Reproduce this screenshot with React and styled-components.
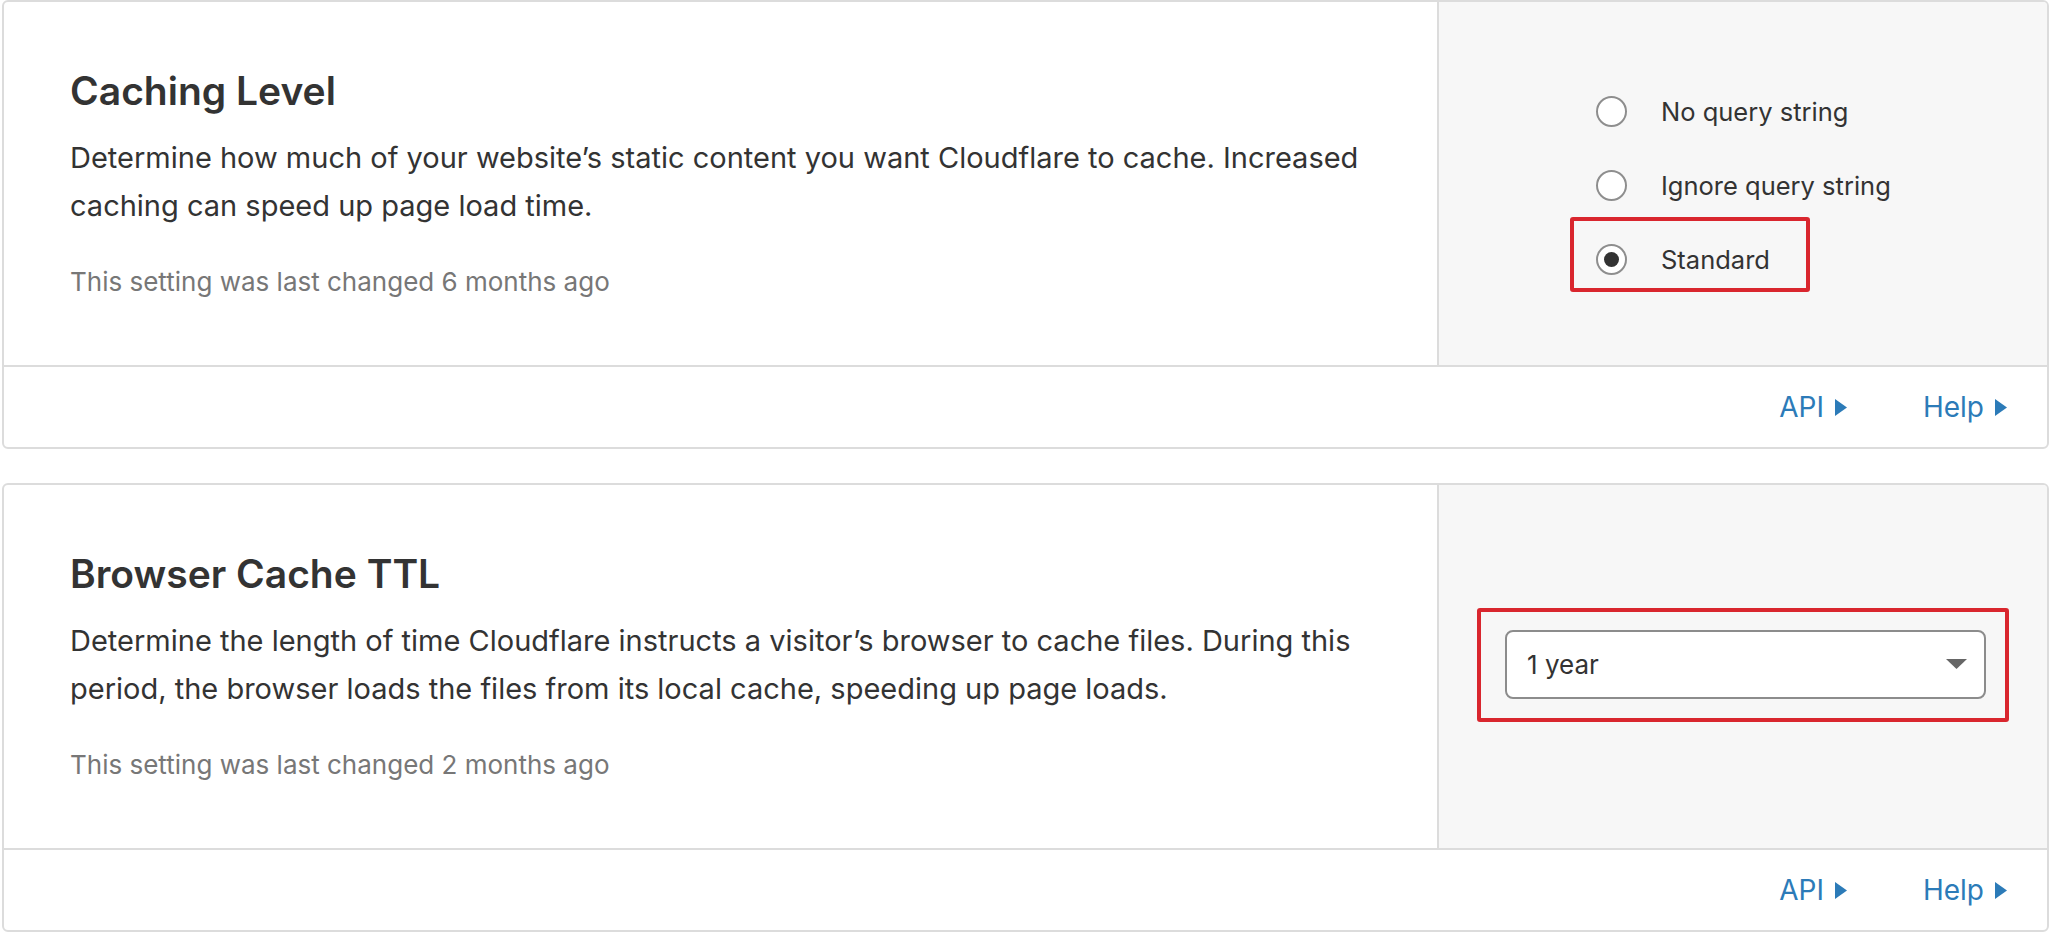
import React from 'react';
import styled, { createGlobalStyle } from 'styled-components';

const GlobalStyle = createGlobalStyle`
  body {
    margin: 0;
    background: #fff;
    font-family: Inter, "Noto Sans", sans-serif;
    color: #333;
  }
`

const Page = styled.div`
  display: flex;
  flex-direction: column;
  gap: 34px;
  padding: 0 1px 0 2px;
`

const Card = styled.section`
  border: 2px solid #dcdcdc;
  border-radius: 6px;
  background: #fff;
  overflow: hidden;
`

Card.Body = styled.div`
  display: grid;
  grid-template-columns: 1fr 610px;
  height: 363px;
  border-bottom: 2px solid #dcdcdc;
`

Card.Text = styled.div`
  padding: 67px 30px 0 66px;
`

Card.Title = styled.h3`
  margin: 0 0 21px;
  font-size: 39px;
  line-height: 44px;
  font-weight: 600;
  color: #333;
`

Card.Desc = styled.p`
  margin: 0;
  font-size: 29px;
  line-height: 48px;
  color: #333;
`

Card.Changed = styled.p`
  margin: 36px 0 0;
  font-size: 26px;
  line-height: 32px;
  color: #777;
`

Card.Control = styled.div`
  background: #f7f7f7;
  border-left: 2px solid #dcdcdc;
  display: flex;
  align-items: center;
  justify-content: ${p => p.$center ? 'center' : 'flex-start'};
  padding-left: ${p => p.$center ? '0' : '157px'};
  padding-top: ${p => p.$center ? '0' : '3px'};
`

Card.Footer = styled.div`
  height: 80px;
  display: flex;
  align-items: center;
  justify-content: flex-end;
  gap: 76px;
  padding-right: 40px;
`

const Link = styled.a`
  display: inline-flex;
  align-items: center;
  gap: 11px;
  font-size: 28px;
  color: #2c7bb8;
  text-decoration: none;
  cursor: pointer;

  svg {
    margin-top: 2px;
  }
`

const Radios = styled.div`
  display: flex;
  flex-direction: column;
  align-items: flex-start;
`

const Option = styled.label`
  position: relative;
  display: flex;
  align-items: center;
  gap: 34px;
  height: 74px;
  font-size: 25.5px;
  color: #333;

  ${p => p.$marked && `
    &::after {
      content: '';
      position: absolute;
      left: -26px;
      right: -40px;
      top: -5px;
      bottom: 4px;
      border: 4px solid #d9262e;
      border-radius: 3px;
    }
  `}
`

const Circle = styled.span`
  box-sizing: border-box;
  width: 31px;
  height: 31px;
  border-radius: 50%;
  border: 2px solid #8e8e8e;
  background: #fff;
  display: flex;
  align-items: center;
  justify-content: center;

  &::before {
    content: '';
    width: 15px;
    height: 15px;
    border-radius: 50%;
    background: #333;
    display: ${p => p.$checked ? 'block' : 'none'};
  }
`

const Highlight = styled.div`
  border: 4px solid #d9262e;
  border-radius: 3px;
  padding: 18px 19px 19px 24px;
  margin-bottom: 4px;
`

const Select = styled.div`
  box-sizing: border-box;
  width: 481px;
  height: 69px;
  border: 2px solid #8c8c8c;
  border-radius: 8px;
  background: #fff;
  display: flex;
  align-items: center;
  justify-content: space-between;
  padding: 0 17px 0 20px;
  font-size: 26px;
  color: #333;
`

const Arrow = ({ size = 12, color = '#2c7bb8' }) => (
  <svg width={size} height={size * 1.42} viewBox="0 0 12 17">
    <polygon points="0,0 12,8.5 0,17" fill={color} />
  </svg>
)

const Caret = () => (
  <svg width="21" height="10" viewBox="0 0 21 10">
    <polygon points="0,0 21,0 10.5,10" fill="#666" />
  </svg>
)

const Setting = ({ title, desc, changed, center, children }) => (
  <Card>
    <Card.Body>
      <Card.Text>
        <Card.Title>{title}</Card.Title>
        <Card.Desc>{desc}</Card.Desc>
        <Card.Changed>{changed}</Card.Changed>
      </Card.Text>
      <Card.Control $center={center}>{children}</Card.Control>
    </Card.Body>
    <Card.Footer>
      <Link>API <Arrow /></Link>
      <Link>Help <Arrow /></Link>
    </Card.Footer>
  </Card>
)

const levels = ['No query string', 'Ignore query string', 'Standard']

export default function App() {
  return (
    <Page>
      <GlobalStyle />
      <Setting
        title="Caching Level"
        desc="Determine how much of your website’s static content you want Cloudflare to cache. Increased caching can speed up page load time."
        changed="This setting was last changed 6 months ago"
      >
        <Radios>
          {levels.map(l => (
            <Option key={l} $marked={l === 'Standard'}>
              <Circle $checked={l === 'Standard'} />
              {l}
            </Option>
          ))}
        </Radios>
      </Setting>
      <Setting
        center
        title="Browser Cache TTL"
        desc="Determine the length of time Cloudflare instructs a visitor’s browser to cache files. During this period, the browser loads the files from its local cache, speeding up page loads."
        changed="This setting was last changed 2 months ago"
      >
        <Highlight>
          <Select>
            1 year
            <Caret />
          </Select>
        </Highlight>
      </Setting>
    </Page>
  )
}
